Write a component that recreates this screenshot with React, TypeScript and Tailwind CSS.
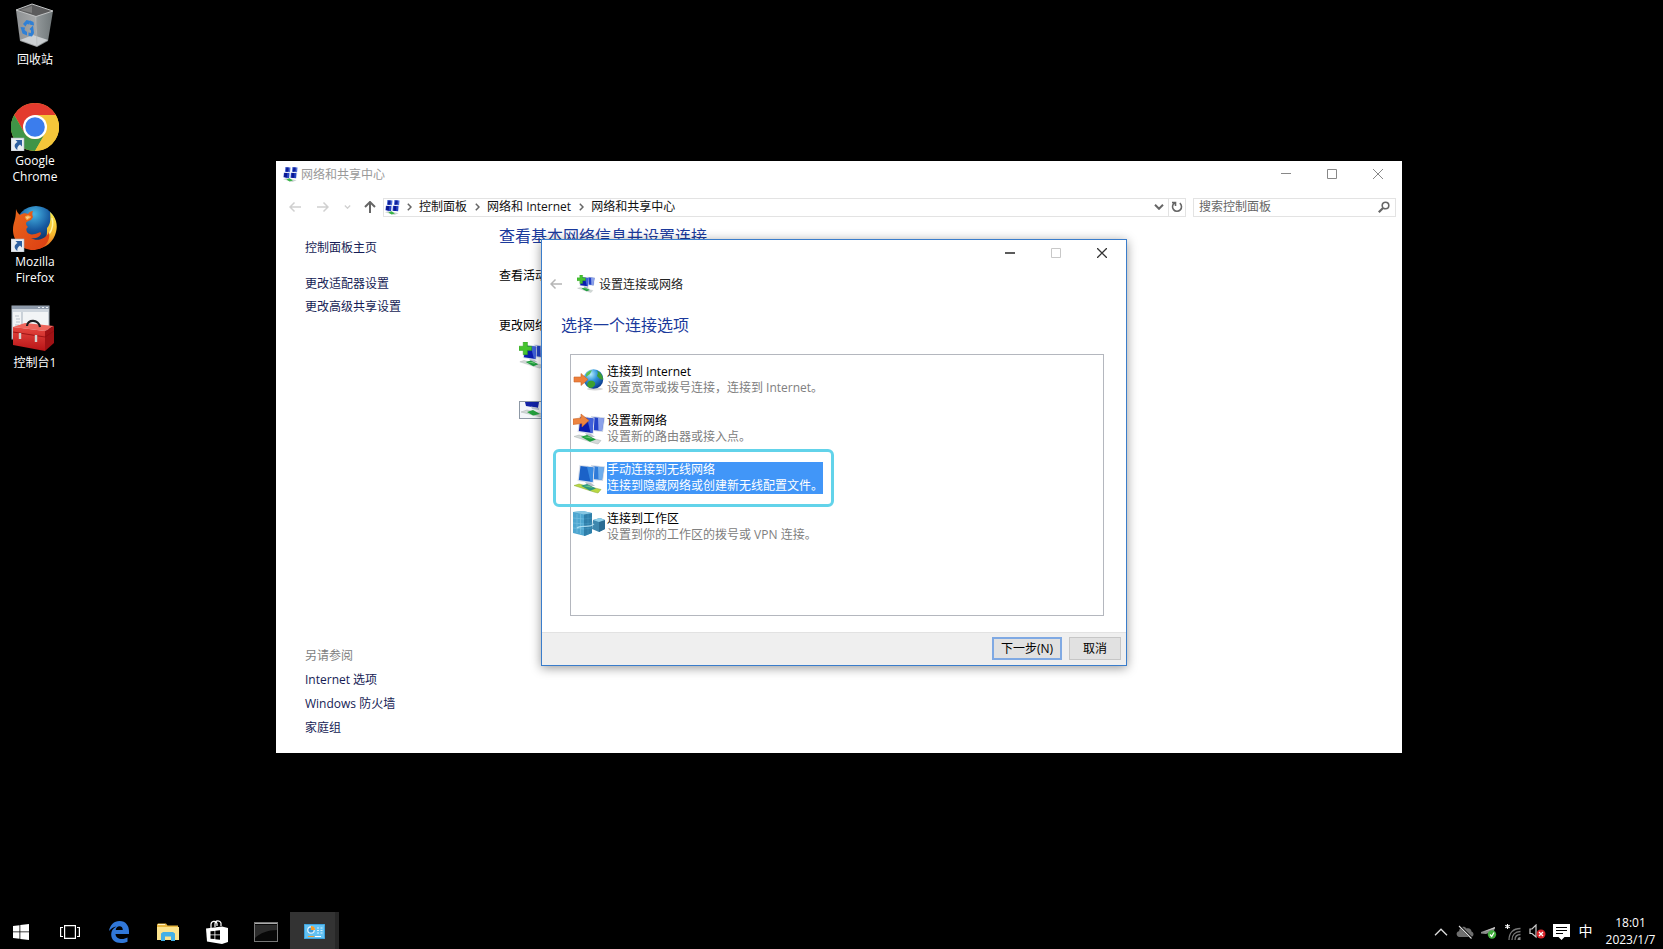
import React, { useState } from "react";

type IconProps = { className?: string };

/* ---------- Desktop icons ---------- */

const RecycleBin = () => (
  <svg viewBox="0 0 48 48" className="size-12" aria-hidden="true">
    <defs>
      <linearGradient id="binL" x1="0" y1="0" x2="1" y2="0">
        <stop offset="0" stopColor="#8f9294" />
        <stop offset="1" stopColor="#a6a8a9" />
      </linearGradient>
      <linearGradient id="binR" x1="0" y1="0" x2="1" y2="0">
        <stop offset="0" stopColor="#93999b" />
        <stop offset="1" stopColor="#6f7678" />
      </linearGradient>
    </defs>
    <path d="M5 8 25 14 26 45 9 39Z" fill="url(#binL)" />
    <path d="M25 14 42 9 37 39 26 45Z" fill="url(#binR)" />
    <path d="M9 38 22 33 37 38 26 44Z" fill="#d5d8da" opacity=".85" />
    <path d="M5 8 21 2 42 9 25 14.500Z" fill="#5b5b5c" stroke="#c3c5c6" strokeWidth="1" />
    <path d="M9 8 21 4 21 11Z" fill="#7b7b7b" />
    <path d="M25 15 26 44" stroke="#b9bcbe" strokeWidth=".8" />
    <g fill="#2f80d6">
      <path d="M12 22 15.500 18 19.500 19 18 22.500 16 22 14.500 24.500Z" />
      <path d="M9.500 25 14 25.500 13.500 28 16 30V33.500L11.500 31.500Z" />
      <path d="M17.500 30.500 20 31 20 28.500 18.500 27 22 23.500 23 31 21 34.500 17.500 34Z" />
      <path d="M19 18.500 22.500 20 23 23.500 18.500 22.500Z" />
    </g>
  </svg>
);

const Shortcut = () => (
  <g>
    <rect x="0" y="35" width="13" height="13" fill="#e9edf2" stroke="#a9b2bd" strokeWidth=".6" />
    <path d="M4.500 37h6.500v6.500l-2-2C6.800 43 6 44.500 6.400 47 2.500 44 3 41 6.500 39Z" fill="#2d5f9f" />
  </g>
);

const Chrome = () => (
  <svg viewBox="0 0 48 48" className="size-12" aria-hidden="true">
    <circle cx="24" cy="24" r="24" fill="#f4c63a" />
    <path d="M24 0A24 24 0 0 1 44.800 12H24L13.600 30 3.200 12A24 24 0 0 1 24 0Z" fill="#e33b2e" />
    <path d="M3.200 12 13.600 30A12 12 0 0 0 34.400 30L24 48A24 24 0 0 1 3.200 12Z" fill="#3f9447" />
    <path d="M24 12H44.800A24 24 0 0 1 24 48L34.400 30Z" fill="#f4c63a" />
    <circle cx="24" cy="24" r="12" fill="#fff" />
    <circle cx="24" cy="24" r="9.800" fill="#3b7ded" />
    <Shortcut />
  </svg>
);

const Firefox = () => (
  <svg viewBox="0 0 48 48" className="size-12" aria-hidden="true">
    <defs>
      <radialGradient id="ffB" cx=".45" cy=".2" r=".8">
        <stop offset="0" stopColor="#46b5e4" />
        <stop offset=".5" stopColor="#17599f" />
        <stop offset="1" stopColor="#0b2550" />
      </radialGradient>
      <linearGradient id="ffO" x1="0" y1="0" x2="1" y2="1">
        <stop offset="0" stopColor="#e8671b" />
        <stop offset="1" stopColor="#dc3d13" />
      </linearGradient>
      <linearGradient id="ffY" x1="0" y1="0" x2="0" y2="1">
        <stop offset="0" stopColor="#f9e84c" />
        <stop offset=".6" stopColor="#f6b82e" />
        <stop offset="1" stopColor="#e4571a" />
      </linearGradient>
    </defs>
    <circle cx="25" cy="22" r="20" fill="url(#ffB)" />
    <path d="M39 8c6 5 8 13 6 20-2 9-10 17-21 17C37 40 36 30 36 24c3-3 4-8 3-16Z" fill="url(#ffY)" />
    <path d="M41 14c2 7 0 12-3 16" fill="none" stroke="#fff3a0" strokeWidth="1.500" />
    <path d="M5 5c1 3 2 4 4 6 3-2 6-2 8-1 1-2 3-3 5-3-1 2-1 4 0 6l-2 3c-2 1-4 1-5 3 0 2 1 3 2 4-2 1-2 3-1 5 3 4 8 2 11 1 2-1 3-1 3 1-2 4-6 5-10 4 6 4 15 1 18-6 2 9-5 18-16 18C11 46 2 37 2 26 2 18 5 17 5 5Z" fill="url(#ffO)" />
    <path d="M14 13c3-2 4-1 6 0l-4 3Z" stroke="#f59a2c" fill="#f7c68b" strokeWidth="1" />
    <Shortcut />
  </svg>
);

const Toolbox = () => (
  <svg viewBox="0 0 48 48" className="size-12" aria-hidden="true">
    <defs>
      <linearGradient id="tbx" x1="0" y1="0" x2="0" y2="1">
        <stop offset="0" stopColor="#e5473f" />
        <stop offset="1" stopColor="#b81417" />
      </linearGradient>
    </defs>
    <rect x="1" y="1" width="37" height="33" fill="#f2f4f6" stroke="#9aa5b1" />
    <rect x="1" y="1" width="37" height="3" fill="#8e9aaa" />
    <path d="M27 2.500h2M31 2.500h2M35 2.500h2" stroke="#e9eef4" />
    <rect x="2" y="4" width="35" height="3" fill="#cfd6de" />
    <path d="M11 7v25" stroke="#a3afbc" />
    <path d="M4 11h4M5 14h4M5 17h4M4 20h4" stroke="#b9c2cb" />
    <path d="M2 22 14 18 43 21 34 26Z" fill="#ee655c" />
    <path d="M2 22 34 26V46L2 40Z" fill="url(#tbx)" />
    <path d="M34 26 43 21V38L34 46Z" fill="#a01215" />
    <path d="M2 27 34 32 43 26" fill="none" stroke="#8f0c0e" strokeWidth=".8" />
    <path d="M16 21c0-7 12-7 13 1" fill="none" stroke="#1c1d20" strokeWidth="2.200" />
    <path d="M9 28v6M25 30v7" stroke="#d4d2cf" strokeWidth="2.400" />
  </svg>
);

/* ---------- Network icons ---------- */

function Monitors({ light = false }: { light?: boolean }) {
  const a = light ? "#1b62c8" : "#0a1cae";
  const b = light ? "#3b8fe6" : "#4668de";
  return (
    <g>
      <path d="M18 3 32 4.500 30 19 20 18Z" fill="#cfd8e6" />
      <path d="M19.500 4 31 5.500 29 18 20.500 17Z" fill={light ? "#2f7bd8" : "#2242c8"} />
      <path d="M25 4.800 31 5.500 29 18 25.500 17.600Z" fill={light ? "#7ab6ee" : "#9db2ee"} opacity=".85" />
      <path d="M6.500 3 21.500 4.500 20.500 21.500 4.500 19Z" fill="#d9e0ec" />
      <path d="M7.500 4 20.500 5.500 19.500 20 5.800 18Z" fill={a} />
      <path d="M14 4.800 20.500 5.500 19.500 20 17.500 19.700Z" fill={b} opacity=".9" />
      <path d="M12 20 18 21 22 24 15 24Z" fill="#b9c0c8" />
      <path d="M1 23.500 6 22 28 27.500 25 31 21 30Z" fill={light ? "#b9d843" : "#d3dad8"} stroke={light ? "#86a82c" : "#a9b1b0"} strokeWidth=".5" />
      <path d="M8 23.800 14 22 23 26.500 17 28.800Z" fill={light ? "#2b9580" : "#1c9c3c"} />
      <path d="M10 24 16 23.500 20 26Z" fill="#86dc8a" opacity=".7" />
    </g>
  );
}

const OrangeArrow = () => (
  <path d="M0 6 8 5V1L16 7.500 9 14V10.500L0 11.500Z" fill="#ee8540" stroke="#c9642a" strokeWidth=".6" />
);

const NewNetworkIcon = () => (
  <svg viewBox="0 0 32 32" className="size-8" aria-hidden="true">
    <Monitors />
    <OrangeArrow />
  </svg>
);

const WirelessIcon = () => (
  <svg viewBox="0 0 32 32" className="size-8" aria-hidden="true">
    <Monitors light />
  </svg>
);

const GlobeIcon = () => (
  <svg viewBox="0 0 32 32" className="size-8" aria-hidden="true">
    <defs>
      <radialGradient id="globe" cx=".35" cy=".25" r=".8">
        <stop offset="0" stopColor="#b6f0ff" />
        <stop offset=".45" stopColor="#2f92d8" />
        <stop offset="1" stopColor="#08348a" />
      </radialGradient>
    </defs>
    <ellipse cx="22" cy="25" rx="8" ry="1.500" fill="#bbb" opacity=".6" />
    <circle cx="20.500" cy="15" r="9.800" fill="url(#globe)" />
    <path d="M24 7c4 1 6 5 6 9l-3-1-3-3 1-3Z" fill="#3d9d35" />
    <path d="M16 17c4-1 7 1 6 4-1 2-3 3-5 3-3-1-4-4-1-7Z" fill="#3da02f" />
    <path d="M13 10c2-3 4-3 6-4l-2 4-4 3Z" fill="#5cbf50" />
    <path d="M1 13h7V9.500l7 6L8 21.500V18H1Z" fill="#ee7f3b" stroke="#c9642a" strokeWidth=".6" />
  </svg>
);

const WorkplaceIcon = () => (
  <svg viewBox="0 0 32 32" className="size-8" aria-hidden="true">
    <path d="M20 9 27 7 32 9V18L26 21 19 18Z" fill="#3e87ae" />
    <path d="M26 10 32 9V18L26 21Z" fill="#2b6c93" />
    <path d="M20 9 27 7 32 9 26 11Z" fill="#8fd0ea" />
    <path d="M0 1 10 0 19 2V22L12 25 0 22Z" fill="#4ea6d0" />
    <path d="M11 3 19 2V22L11 25Z" fill="#2f7ea9" />
    <path d="M0 1 10 0 19 2 11 3.500Z" fill="#86c6e2" />
    <path d="M4 3v19M7.500 3v20M0 7l11 1M0 12l11 1M0 17l11 1" stroke="#7cc4e4" strokeWidth=".6" />
    <path d="M11 8l8-1M11 13l8-1M11 18l8-1M15 3v20" stroke="#4a9cc4" strokeWidth=".5" />
    <path d="M4 17c4-4 11 1 17-4" stroke="#bfeafa" strokeWidth="1.200" fill="none" opacity=".8" />
  </svg>
);

const AddNetworkIcon = ({ className }: IconProps) => (
  <svg viewBox="0 0 32 32" className={className} aria-hidden="true">
    <Monitors />
    <path d="M5 0h5v5h5v5h-5v5H5v-5H0V5h5Z" fill="#46c42f" stroke="#2b9a1d" strokeWidth=".6" />
  </svg>
);

const CenterIcon = ({ className }: IconProps) => (
  <svg viewBox="0 0 16 16" className={className} aria-hidden="true">
    <path d="M2.500 0 8 .5 7.500 5.500 2 5ZM10 0l5.500.5L15 5.500l-5.500-.5Z" fill="#4a6bd6" />
    <path d="M3.500 .5h2.500v4.500H3ZM11 .5h2.500v4.500h-3Z" fill="#0f1e9a" />
    <path d="M1 6 7 6.500 6.500 12 .5 11ZM8.500 6l6 .5L14 12l-6-.5Z" fill="#2443c4" />
    <path d="M1.500 6.500 4.500 6.500 4 11.500 1 10.500ZM9.500 6.500h2.500v5H9Z" fill="#0b1690" />
    <path d="M6 5.500 8 7M13 5 15 7" stroke="#cfd6ec" />
    <path d="M0 13 4 11.800 14.500 14 10 16Z" fill="#cdd5d3" />
    <path d="M3.500 13.200 7 12 10.500 14.500 7 15.500Z" fill="#38b548" />
  </svg>
);

const TroubleshootIcon = () => (
  <svg viewBox="0 0 32 18" className="h-[18px] w-8" aria-hidden="true">
    <rect x=".5" y=".5" width="31" height="17" fill="#f3f6f9" stroke="#8d98a5" />
    <path d="M6 1h14l-1 6L7 5Z" fill="#1222a6" />
    <path d="M12 5.500 20 7 20 9 13 8Z" fill="#bcc4cf" />
    <path d="M2 11 8 9 28 14 22 16Z" fill="#d3dad8" stroke="#a9b1b0" strokeWidth=".5" />
    <path d="M8 11 14 9 21 13 14 14.500Z" fill="#23a13e" />
  </svg>
);

/* ---------- Line glyphs ---------- */

const ArrowLeft = ({ className }: IconProps) => (
  <svg viewBox="0 0 12 12" className={className} fill="none" stroke="currentColor" strokeWidth="1.500" aria-hidden="true">
    <path d="M12 6H1.500M5.500 1.500 1 6l4.500 4.500" />
  </svg>
);
const ArrowRight = () => (
  <svg viewBox="0 0 12 12" className="size-3" fill="none" stroke="currentColor" strokeWidth="1.500" aria-hidden="true">
    <path d="M0 6h10.500M6.500 1.500 11 6l-4.500 4.500" />
  </svg>
);
const ArrowUp = () => (
  <svg viewBox="0 0 12 12" className="size-3" fill="none" stroke="currentColor" strokeWidth="2" aria-hidden="true">
    <path d="M6 12V1.500M1 6l5-5 5 5" />
  </svg>
);
const ChevDown = ({ className }: IconProps) => (
  <svg viewBox="0 0 10 6" className={className} fill="none" stroke="currentColor" strokeWidth="2" aria-hidden="true">
    <path d="M1 .8 5 4.800 9 .8" />
  </svg>
);
const Crumb = () => (
  <svg viewBox="0 0 5 8" className="h-2 w-[5px] shrink-0" fill="none" stroke="#666" strokeWidth="1.500" aria-hidden="true">
    <path d="M.8 .8 4 4 .8 7.200" />
  </svg>
);

function WindowControls({ dialog = false }: { dialog?: boolean }) {
  const btn = "flex h-full w-[46px] items-center justify-center";
  return (
    <div className={"ml-auto flex h-full pr-px " + (dialog ? "text-[#333]" : "text-[#888]")}>
      <button className={btn} aria-label="最小化">
        <svg viewBox="0 0 10 10" className="size-2.5" fill="none" stroke="currentColor">
          <path d={dialog ? "M0 5h10" : "M0 4.500h10"} strokeWidth={dialog ? 1.600 : 1} />
        </svg>
      </button>
      <button className={btn} aria-label="最大化" disabled={dialog}>
        <svg viewBox="0 0 10 10" className="size-2.5" fill="none" stroke={dialog ? "#c8c8c8" : "currentColor"}>
          <path d="M.5 .5h9v9h-9Z" />
        </svg>
      </button>
      <button className={btn} aria-label="关闭">
        <svg viewBox="0 0 10 10" className="size-2.5" fill="none" stroke="currentColor" strokeWidth={dialog ? 1.300 : 1}>
          <path d="M0 0 10 10M10 0 0 10" />
        </svg>
      </button>
    </div>
  );
}

/* ---------- Data ---------- */

const shortcuts = [
  { label: "回收站", icon: <RecycleBin /> },
  { label: "Google Chrome", icon: <Chrome /> },
  { label: "Mozilla Firefox", icon: <Firefox /> },
  { label: "控制台1", icon: <Toolbox /> },
];

const options = [
  { title: "连接到 Internet", text: "设置宽带或拨号连接，连接到 Internet。", icon: <GlobeIcon /> },
  { title: "设置新网络", text: "设置新的路由器或接入点。", icon: <NewNetworkIcon /> },
  { title: "手动连接到无线网络", text: "连接到隐藏网络或创建新无线配置文件。", icon: <WirelessIcon />, marked: true },
  { title: "连接到工作区", text: "设置到你的工作区的拨号或 VPN 连接。", icon: <WorkplaceIcon /> },
];

const apps = [
  {
    label: "任务视图",
    icon: (
      <svg viewBox="0 0 20 14" className="h-3.5 w-5" fill="none" stroke="#fff" strokeWidth="1.200">
        <path d="M4.600 .6h10.800v12.800H4.600ZM3 2.500H.6v9H3M17 2.500h2.400v9H17" />
      </svg>
    ),
  },
  {
    label: "Microsoft Edge",
    icon: (
      <svg viewBox="0 0 20 22" className="h-[22px] w-5">
        <path d="M0 10C1 4 5 0 10.500 0 17 0 20 5 20 10v3H6.500c.2 3.500 3 5 6.300 5 2.300 0 4.200-.6 5.700-1.500v4.300C16.800 21.700 14.500 22 12 22 6 22 2.200 18.500 2.200 13.500 2.200 10 4 7 7.500 5.400 4.500 5.800 1.800 7.500 0 10ZM6.700 9h7.100C13.800 6.500 12.700 5.200 10.500 5.200 8.500 5.200 7 6.700 6.700 9Z" fill="#3077d8" />
      </svg>
    ),
  },
  {
    label: "文件资源管理器",
    icon: (
      <svg viewBox="0 0 22 18" className="h-[18px] w-[22px]">
        <path d="M0 1.500 1 .5h8l1.500 2H21v14H0Z" fill="#e8b73f" />
        <path d="M0 4h22v13H0Z" fill="#fbe38d" />
        <path d="M1 1.500h7" stroke="#fff2c4" />
        <path d="M4 18V10.500L6 9h10l2 1.500V18h-4v-4.500H8V18Z" fill="#43b0e6" />
      </svg>
    ),
  },
  {
    label: "应用商店",
    icon: (
      <svg viewBox="0 0 22 24" className="h-6 w-[22px]">
        <path d="M5 8V4.500C5 1 10 0 11 3.500V6M9 7V4c0-4 5-4 6-1V6" fill="none" stroke="#fff" strokeWidth="1.200" />
        <path d="M0 8.500 16 6.500 22 8V22l-6 2L1 21.500Z" fill="#fff" />
        <path d="M4.500 11.300 8.500 10.900V14.500h-4ZM9.300 10.800 14 10.300v4.200H9.300ZM4.500 15.300h4v3.800l-4-.4ZM9.300 15.300H14v4.500l-4.700-.6Z" fill="#000" />
      </svg>
    ),
  },
  {
    label: "命令提示符",
    icon: (
      <svg viewBox="0 0 24 20" className="h-5 w-6">
        <rect x=".5" y=".5" width="23" height="19" fill="#080808" stroke="#777" />
        <path d="M1 1h22v1H1Z" fill="#aaa" />
        <path d="M1 3h22v5C14 8 6 11 1 16Z" fill="#2b2b2b" />
      </svg>
    ),
  },
  {
    label: "控制面板",
    active: true,
    icon: (
      <svg viewBox="0 0 21 15" className="h-[15px] w-[21px]">
        <rect width="21" height="15" rx="1" fill="#62c1f2" />
        <rect x=".5" y=".5" width="20" height="14" rx="1" fill="none" stroke="#3aa0dd" />
        <circle cx="7" cy="6" r="3.800" fill="#e6f5fd" />
        <circle cx="7" cy="6" r="2.600" fill="#3f9ad8" />
        <path d="M7 6V2a4 4 0 0 1 4 4Z" fill="#f39c2b" />
        <path d="M13 4h2M13 6.500h2M13 9h2M16.500 4h2M16.500 6.500h2M16.500 9h2" stroke="#d9f2ff" />
        <path d="M4 12.500h6" stroke="#f39c2b" />
        <path d="M11 12.500h6" stroke="#fff" />
      </svg>
    ),
  },
];

const tray = [
  {
    label: "显示隐藏的图标",
    icon: (
      <svg viewBox="0 0 14 8" className="h-2 w-3.5" fill="none" stroke="#ddd" strokeWidth="1.300">
        <path d="M1 7.200 7 1.200 13 7.200" />
      </svg>
    ),
  },
  {
    label: "OneDrive",
    icon: (
      <svg viewBox="0 0 18 14" className="h-3.5 w-[18px]">
        <path d="M3.500 12C0 12-.5 6.800 3 6.300 3.500 1.500 8.500 .5 10.500 3.500 13 2.500 15.500 4 15.500 6.500 18.500 7.500 18 12 15 12Z" fill="#6f6f6f" />
        <path d="M3.500 1 16 13.500" stroke="#000" strokeWidth="2.400" />
        <path d="M3 1 15.500 13.500" stroke="#ddd" strokeWidth="1.100" />
      </svg>
    ),
  },
  {
    label: "安全删除硬件",
    icon: (
      <svg viewBox="0 0 16 14" className="h-3.5 w-4">
        <path d="M0 7 14 2 13 6 5 9 0 8.500Z" fill="#8a8a8a" />
        <path d="M2 7 14 2 14 3.500Z" fill="#c9c9c9" />
        <circle cx="11" cy="9.500" r="4.200" fill="#3fae3b" />
        <path d="M9 9.500 10.700 11.500 13 7.500" stroke="#fff" strokeWidth="1.300" fill="none" />
      </svg>
    ),
  },
  {
    label: "网络",
    icon: (
      <svg viewBox="0 0 17 16" className="h-4 w-[17px]" fill="none">
        <path d="M2.500 0v5M.3 1.200l4.400 2.600M4.700 1.200.3 3.800" stroke="#fff" strokeWidth="1.100" />
        <path d="M4 16C4 9 8 4.500 15.500 4.500M7 16c0-5 3-8.500 8.500-8.500M10 16c0-3.500 2-5.500 5.500-5.500" stroke="#777" strokeWidth="1.300" />
        <path d="M12.500 16c0-2 1-3 3-3v3Z" fill="#888" />
      </svg>
    ),
  },
  {
    label: "音量",
    icon: (
      <svg viewBox="0 0 17 15" className="h-[15px] w-[17px]" fill="none">
        <path d="M1 5h2l4-4v12L3 9.500H1Z" stroke="#ccc" strokeWidth="1.200" />
        <circle cx="12" cy="10" r="4.500" fill="#d9252b" />
        <path d="m10 8 4 4m0-4-4 4" stroke="#fff" strokeWidth="1.300" />
      </svg>
    ),
  },
  {
    label: "操作中心",
    icon: (
      <svg viewBox="0 0 17 16" className="h-4 w-[17px]">
        <path d="M0 0h17v13h-5.500L8.500 16 5.500 13H0Z" fill="#fff" />
        <path d="M3 3.500h11M3 6.500h11M3 9.500h7" stroke="#000" strokeWidth="1.200" />
      </svg>
    ),
  },
];

/* ---------- Windows ---------- */

function SharingCenter() {
  const nav = "flex h-5 items-center justify-center";
  const link = "block text-[#151c55]";
  return (
    <section className="absolute top-[161px] right-[261px] bottom-[196px] left-[276px] flex flex-col bg-white">
      <header className="flex h-[26px] items-center gap-[3px] pl-[7px] text-[#999]">
        <CenterIcon className="size-[15px]" />
        <h1 className="pt-0.5">网络和共享中心</h1>
        <WindowControls />
      </header>
      <div className="mt-2.5 flex h-5 items-center pr-1.5 pl-[5px]">
        <button className={nav + " w-7 text-[#d0d0d0]"} aria-label="后退"><ArrowLeft className="size-3" /></button>
        <button className={nav + " w-7 text-[#d0d0d0]"} aria-label="前进"><ArrowRight /></button>
        <button className={nav + " w-5 text-[#d0d0d0]"} aria-label="最近位置"><ChevDown className="h-1 w-[7px]" /></button>
        <button className={nav + " w-[26px] text-[#666]"} aria-label="向上"><ArrowUp /></button>
        <nav className="flex h-[19px] flex-1 items-center gap-[7px] border border-[#e3e3e3] pl-px text-[#111]">
          <CenterIcon className="size-[15px]" />
          <Crumb />
          <a href="#panel" className="pr-px">控制面板</a>
          <Crumb />
          <a href="#network" className="pr-px">网络和 Internet</a>
          <Crumb />
          <a href="#sharing">网络和共享中心</a>
          <div className="ml-auto flex h-full items-center text-[#666]">
            <button className="flex h-full w-[19px] items-center justify-center" aria-label="展开"><ChevDown className="h-1.5 w-2.5" /></button>
            <button className="flex h-full w-[17px] items-center justify-center border-l border-[#e3e3e3]" aria-label="刷新">
              <svg viewBox="0 0 12 12" className="size-3" fill="none" stroke="currentColor" strokeWidth="1.600">
                <path d="M3.500 2A4.500 4.500 0 1 0 8.800 2.200M1 1.500h3.500V5" />
              </svg>
            </button>
          </div>
        </nav>
        <div className="ml-[7px] flex h-[19px] w-[203px] items-center border border-[#e3e3e3] pr-[5px] pl-[5px]">
          <input
            aria-label="搜索控制面板"
            placeholder="搜索控制面板"
            className="min-w-0 flex-1 bg-transparent outline-none placeholder:text-[#666]"
          />
          <svg viewBox="0 0 12 12" className="size-3" fill="none" stroke="#666" aria-hidden="true">
            <circle cx="7.500" cy="4.500" r="3.300" strokeWidth="1.600" />
            <path d="M5 7 .8 11.200" strokeWidth="2.200" />
          </svg>
        </div>
      </div>
      <div className="flex flex-1">
        <aside className="flex w-[223px] flex-col justify-between pt-[23px] pb-[17px] pl-[29px]">
          <div>
            <a href="#home" className={link}>控制面板主页</a>
            <a href="#adapter" className={link + " mt-5"}>更改适配器设置</a>
            <a href="#advanced" className={link + " mt-[7px]"}>更改高级共享设置</a>
          </div>
          <div className="flex flex-col gap-2">
            <h2 className="text-[#808080]">另请参阅</h2>
            <a href="#internet" className={link}>Internet 选项</a>
            <a href="#firewall" className={link}>Windows 防火墙</a>
            <a href="#homegroup" className={link}>家庭组</a>
          </div>
        </aside>
        <main className="flex-1 pt-[7px]">
          <h2 className="text-base leading-6 text-[#1b3a9c]">查看基本网络信息并设置连接</h2>
          <p className="mt-5">查看活动</p>
          <p className="mt-[34px]">更改网络</p>
          <div className="mt-2 flex flex-col items-start gap-8 pl-5">
            <AddNetworkIcon className="size-[27px]" />
            <TroubleshootIcon />
          </div>
        </main>
      </div>
    </section>
  );
}

function ConnectionWizard() {
  const [selected, setSelected] = useState(2);
  return (
    <section
      role="dialog"
      aria-label="设置连接或网络"
      className="absolute top-[239px] left-[541px] flex w-[586px] flex-col border border-[#3a7dcb] bg-white shadow-[0_2px_10px_rgba(0,0,0,0.4)]"
    >
      <div className="flex h-[26px]">
        <WindowControls dialog />
      </div>
      <header className="mt-2 flex h-5 items-center pl-2">
        <button aria-label="后退" className="text-[#b5b5b5]"><ArrowLeft className="size-3" /></button>
        <AddNetworkIcon className="ml-[15px] size-[18px]" />
        <h1 className="ml-1 pt-0.5 text-[#222]">设置连接或网络</h1>
      </header>
      <h2 className="mt-[19px] pl-[19px] text-base leading-6 text-[#1b3a9c]">选择一个连接选项</h2>
      <ul className="mt-[17px] mr-[22px] ml-7 flex h-[262px] flex-col items-start gap-[17px] border border-[#b4b7be] pt-[9px] pl-0.5">
        {options.map((o, i) => (
          <li key={o.title} className="relative">
            <button
              className="flex items-center gap-0.5 text-left"
              aria-pressed={selected === i}
              onClick={() => setSelected(i)}
            >
              {o.icon}
              <span className={selected === i ? "block bg-[#4196f8] text-white" : "block text-[#808080]"}>
                <span className={selected === i ? "block" : "block text-black"}>{o.title}</span>
                <span className="block">{o.text}</span>
              </span>
            </button>
            {o.marked && (
              <div className="pointer-events-none absolute -top-[13px] -right-[11px] -bottom-[13px] -left-5 rounded-md border-[3px] border-[#62d3ea]" />
            )}
          </li>
        ))}
      </ul>
      <footer className="mt-4 flex h-[33px] justify-end gap-[7px] border-t border-[#e2e2e2] bg-[#efefef] pt-1 pr-[5px]">
        <button className="h-[23px] w-[70px] border-2 border-[#7fa9e3] bg-[#e1e1e1]">下一步(N)</button>
        <button className="h-[23px] w-[52px] border border-[#c6c6c6] bg-[#e1e1e1]">取消</button>
      </footer>
    </section>
  );
}

export default function App() {
  return (
    <div className="relative flex min-h-screen flex-col overflow-hidden bg-black font-['Open_Sans','Noto_Sans_CJK_SC',sans-serif] text-xs leading-4 text-black">
      <div className="flex flex-1 flex-col pt-0.5">
        {shortcuts.map((s) => (
          <button key={s.label} className="flex h-[101px] w-[70px] flex-col items-center gap-0.5 text-white">
            {s.icon}
            <span className="w-[60px]">{s.label}</span>
          </button>
        ))}
      </div>
      <SharingCenter />
      <ConnectionWizard />
      <footer className="flex h-[37px] bg-black text-white">
        <button aria-label="开始" className="flex w-[45px] items-center justify-center pt-0.5 pr-[3px]">
          <svg viewBox="0 0 16 16" className="size-4" fill="#fff">
            <path d="M0 2 6.500 1.200V7.500H0ZM7.300 1.100 16 0V7.500H7.300ZM0 8.300H6.500V14.800L0 14ZM7.300 8.300H16V16L7.300 14.900Z" />
          </svg>
        </button>
        {apps.map((a) => (
          <button
            key={a.label}
            aria-label={a.label}
            className={
              a.active
                ? "flex w-[49px] items-center justify-center border-r-4 border-[#272727] bg-[#333] pt-0.5 pl-1"
                : "flex w-[49px] items-center justify-center pt-0.5"
            }
          >
            {a.icon}
          </button>
        ))}
        <div className="ml-auto flex">
          {tray.map((t) => (
            <button key={t.label} aria-label={t.label} className="flex w-6 items-center justify-center pt-0.5">
              {t.icon}
            </button>
          ))}
          <button className="w-[25px] pt-px text-sm">中</button>
          <time className="flex w-[65px] flex-col justify-center text-center leading-[17px]">
            <span>18:01</span>
            <span>2023/1/7</span>
          </time>
        </div>
      </footer>
    </div>
  );
}
